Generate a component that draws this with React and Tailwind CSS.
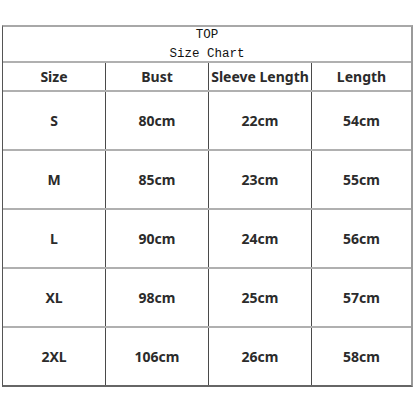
const rows = [
  ["S", "80cm", "22cm", "54cm"],
  ["M", "85cm", "23cm", "55cm"],
  ["L", "90cm", "24cm", "56cm"],
  ["XL", "98cm", "25cm", "57cm"],
  ["2XL", "106cm", "26cm", "58cm"],
];

const headers = ["Size", "Bust", "Sleeve Length", "Length"];

function Row({ cells, height, last }) {
  return (
    <div
      className={`grid grid-cols-[103px_103px_103px_1fr] ${
        last ? "" : "border-b-2 border-[#b0b0b0]"
      } ${height}`}
    >
      {cells.map((c, i) => (
        <div
          key={i}
          className={`flex items-center justify-center ${
            i < 3 ? "border-r border-[#4a4a4a]" : ""
          }`}
        >
          {c}
        </div>
      ))}
    </div>
  );
}

export default function App() {
  return (
    <div className="w-[416px] h-[416px] bg-white pt-[25px] pl-[2px]">
      <div
        className="w-[411px] border-t-2 border-t-[#a8a8a8] border-l border-l-[#555] border-r-2 border-r-[#9a9a9a] border-b-2 border-b-[#666] text-[#2b2b2b] text-[14px] font-bold"
        style={{ fontFamily: '"Noto Sans", "DejaVu Sans", sans-serif' }}
      >
        <div
          className="h-[36px] border-b-2 border-[#b0b0b0] flex flex-col items-center justify-center text-[12.5px] font-normal text-[#111] leading-[19px] pt-[1px]"
          style={{ fontFamily: '"Liberation Mono", monospace' }}
        >
          <div>TOP</div>
          <div>Size Chart</div>
        </div>
        <Row cells={headers} height="h-[29px]" />
        {rows.map((r, i) => (
          <Row key={r[0]} cells={r} height={i === rows.length - 1 ? "h-[57px]" : "h-[59px]"} last={i === rows.length - 1} />
        ))}
      </div>
    </div>
  );
}
